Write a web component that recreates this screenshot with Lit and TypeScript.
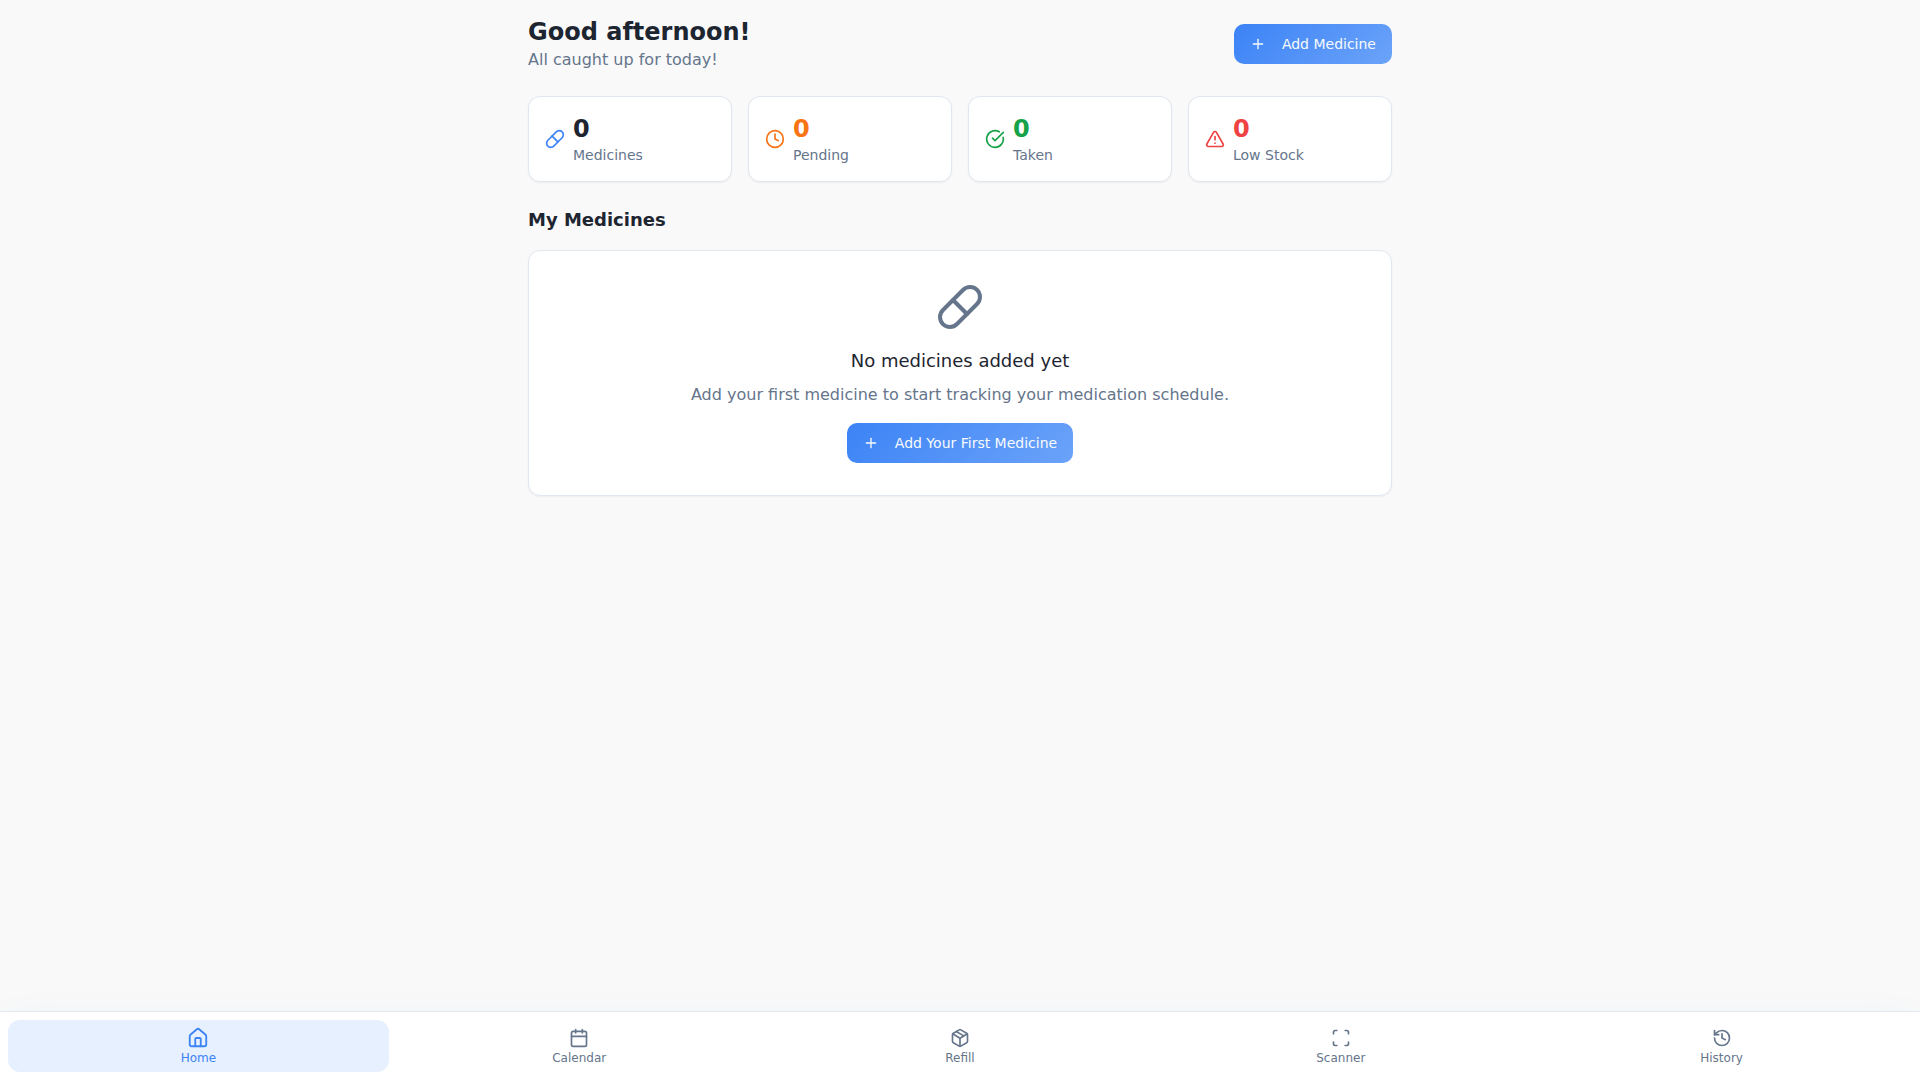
import { LitElement, html, css, svg, type SVGTemplateResult } from "lit";
import { customElement, property, state } from "lit/decorators.js";

const ICONS: Record<string, SVGTemplateResult> = {
  pill: svg`<path d="m10.5 20.5 10-10a4.95 4.95 0 1 0-7-7l-10 10a4.95 4.95 0 1 0 7 7Z"/><path d="m8.5 8.5 7 7"/>`,
  clock: svg`<circle cx="12" cy="12" r="10"/><polyline points="12 6 12 12 16 14"/>`,
  check: svg`<path d="M21.801 10A10 10 0 1 1 17 3.335"/><path d="m9 11 3 3L22 4"/>`,
  alert: svg`<path d="m21.73 18-8-14a2 2 0 0 0-3.48 0l-8 14A2 2 0 0 0 4 21h16a2 2 0 0 0 1.73-3"/><path d="M12 9v4"/><path d="M12 17h.01"/>`,
  plus: svg`<path d="M5 12h14"/><path d="M12 5v14"/>`,
  home: svg`<path d="M15 21v-8a1 1 0 0 0-1-1h-4a1 1 0 0 0-1 1v8"/><path d="M3 10a2 2 0 0 1 .709-1.528l7-5.999a2 2 0 0 1 2.582 0l7 5.999A2 2 0 0 1 21 10v9a2 2 0 0 1-2 2H5a2 2 0 0 1-2-2z"/>`,
  calendar: svg`<path d="M8 2v4"/><path d="M16 2v4"/><rect width="18" height="18" x="3" y="4" rx="2"/><path d="M3 10h18"/>`,
  package: svg`<path d="M11 21.73a2 2 0 0 0 2 0l7-4A2 2 0 0 0 21 16V8a2 2 0 0 0-1-1.73l-7-4a2 2 0 0 0-2 0l-7 4A2 2 0 0 0 3 8v8a2 2 0 0 0 1 1.73z"/><path d="M12 22V12"/><path d="m3.3 7 7.703 4.734a2 2 0 0 0 1.994 0L20.7 7"/><path d="m7.5 4.27 9 5.15"/>`,
  scan: svg`<path d="M3 7V5a2 2 0 0 1 2-2h2"/><path d="M17 3h2a2 2 0 0 1 2 2v2"/><path d="M21 17v2a2 2 0 0 1-2 2h-2"/><path d="M7 21H5a2 2 0 0 1-2-2v-2"/>`,
  history: svg`<path d="M3 12a9 9 0 1 0 9-9 9.75 9.75 0 0 0-6.74 2.74L3 8"/><path d="M3 3v5h5"/><path d="M12 7v5l4 2"/>`,
};

@customElement("app-icon")
export class AppIcon extends LitElement {
  @property() name = "";

  static styles = css`
    :host {
      display: block;
      flex: none;
      width: 20px;
      height: 20px;
    }
    .glyph {
      display: block;
      width: 100%;
      height: 100%;
      fill: none;
      stroke: currentColor;
      stroke-width: 2;
      stroke-linecap: round;
      stroke-linejoin: round;
    }
  `;

  render() {
    return html`<svg class="glyph" viewBox="0 0 24 24" aria-hidden="true">${ICONS[this.name]}</svg>`;
  }
}

@customElement("stat-card")
export class StatCard extends LitElement {
  @property() icon = "";
  @property() label = "";
  @property({ type: Number }) value = 0;

  static styles = css`
    :host {
      display: flex;
      align-items: center;
      gap: 8px;
      padding: 16px;
      border: 1px solid #e1e7ef;
      border-radius: 12px;
      background: #ffffff;
      box-shadow: 0 1px 2px rgba(0, 0, 0, 0.05);
    }
    .icon {
      color: var(--icon-color, var(--tone));
    }
    .value {
      margin: 0;
      color: var(--tone);
      font-size: 24px;
      line-height: 32px;
      font-weight: 700;
    }
    .label {
      margin: 0;
      color: #65758b;
      font-size: 14px;
      line-height: 20px;
    }
  `;

  render() {
    return html`
      <app-icon class="icon" name=${this.icon}></app-icon>
      <div>
        <p class="value">${this.value}</p>
        <p class="label">${this.label}</p>
      </div>
    `;
  }
}

const STATS = [
  { id: "medicines", icon: "pill", label: "Medicines", value: 0 },
  { id: "pending", icon: "clock", label: "Pending", value: 0 },
  { id: "taken", icon: "check", label: "Taken", value: 0 },
  { id: "low", icon: "alert", label: "Low Stock", value: 0 },
];

const TABS = [
  { id: "home", icon: "home", label: "Home" },
  { id: "calendar", icon: "calendar", label: "Calendar" },
  { id: "refill", icon: "package", label: "Refill" },
  { id: "scanner", icon: "scan", label: "Scanner" },
  { id: "history", icon: "history", label: "History" },
];

@customElement("app-root")
export class AppRoot extends LitElement {
  @state() private active = "home";

  static styles = css`
    :host {
      display: flex;
      flex-direction: column;
      min-height: 100vh;
      background: #f9f9f9;
      color: #1d2530;
      font-family: "DejaVu Sans", sans-serif;
      font-size: 16px;
      line-height: 24px;
    }
    .content {
      flex: 1;
      box-sizing: border-box;
      width: 100%;
      max-width: 896px;
      margin: 0 auto;
      padding: 16px;
      display: flex;
      flex-direction: column;
      gap: 24px;
    }
    .header {
      display: flex;
      align-items: center;
      justify-content: space-between;
    }
    .title,
    .subtitle,
    .section-title,
    .empty-title,
    .empty-text {
      margin: 0;
    }
    .title {
      font-size: 24px;
      line-height: 32px;
      font-weight: 700;
    }
    .subtitle,
    .empty-text {
      color: #65758b;
    }
    .stats {
      display: grid;
      grid-template-columns: repeat(4, minmax(0, 1fr));
      gap: 16px;
    }
    .stat-medicines {
      --tone: #1d2530;
      --icon-color: #3c83f6;
    }
    .stat-pending {
      --tone: #f97415;
    }
    .stat-taken {
      --tone: #16a249;
    }
    .stat-low {
      --tone: #ef4343;
    }
    .section {
      display: flex;
      flex-direction: column;
      gap: 16px;
    }
    .section-title {
      font-size: 18px;
      line-height: 28px;
      font-weight: 600;
    }
    .empty {
      display: flex;
      flex-direction: column;
      align-items: center;
      gap: 16px;
      padding: 32px;
      border: 1px solid #e1e7ef;
      border-radius: 12px;
      background: #ffffff;
      box-shadow: 0 1px 2px rgba(0, 0, 0, 0.05);
      text-align: center;
    }
    .empty-icon {
      width: 48px;
      height: 48px;
      color: #65758b;
    }
    .empty-copy {
      display: flex;
      flex-direction: column;
      gap: 8px;
    }
    .empty-title {
      font-size: 18px;
      line-height: 28px;
      font-weight: 500;
    }
    .action {
      display: inline-flex;
      align-items: center;
      gap: 16px;
      height: 40px;
      padding: 0 16px;
      border: 0;
      border-radius: 10px;
      background: linear-gradient(135deg, #3c83f6, #6ba3f9);
      color: #f8fafc;
      font: 500 14px/20px "DejaVu Sans", sans-serif;
      cursor: pointer;
    }
    .action-icon {
      width: 16px;
      height: 16px;
    }
    .tabs {
      position: sticky;
      bottom: 0;
      display: flex;
      padding: 8px;
      border-top: 1px solid #e1e7ef;
      background: #ffffff;
      box-shadow: 0 10px 40px -10px rgba(60, 131, 246, 0.15);
    }
    .tab {
      flex: 1 1 0;
      display: flex;
      flex-direction: column;
      align-items: center;
      gap: 2px;
      padding: 8px 8px 6px;
      border-radius: 12px;
      color: #65758b;
      font-size: 12px;
      line-height: 16px;
      font-weight: 500;
      text-decoration: none;
    }
    .tab[aria-current="page"] {
      background: #e7f0fe;
      color: #3c83f6;
    }
    .tab[aria-current="page"] .tab-icon {
      transform: scale(1.1);
    }
  `;

  private action(label: string) {
    return html`
      <button class="action" type="button">
        <app-icon class="action-icon" name="plus"></app-icon>
        <span>${label}</span>
      </button>
    `;
  }

  render() {
    return html`
      <main class="content">
        <header class="header">
          <div>
            <h1 class="title">Good afternoon!</h1>
            <p class="subtitle">All caught up for today!</p>
          </div>
          ${this.action("Add Medicine")}
        </header>
        <div class="stats">
          ${STATS.map(
            (s) => html`<stat-card class="stat-${s.id}" icon=${s.icon} label=${s.label} .value=${s.value}></stat-card>`,
          )}
        </div>
        <section class="section">
          <h2 class="section-title">My Medicines</h2>
          <div class="empty">
            <app-icon class="empty-icon" name="pill"></app-icon>
            <div class="empty-copy">
              <h3 class="empty-title">No medicines added yet</h3>
              <p class="empty-text">Add your first medicine to start tracking your medication schedule.</p>
            </div>
            ${this.action("Add Your First Medicine")}
          </div>
        </section>
      </main>
      <nav class="tabs">
        ${TABS.map(
          (t) => html`
            <a
              class="tab"
              href="#${t.id}"
              aria-current=${this.active === t.id ? "page" : "false"}
              @click=${() => (this.active = t.id)}
            >
              <app-icon class="tab-icon" name=${t.icon}></app-icon>
              <span>${t.label}</span>
            </a>
          `,
        )}
      </nav>
    `;
  }
}
